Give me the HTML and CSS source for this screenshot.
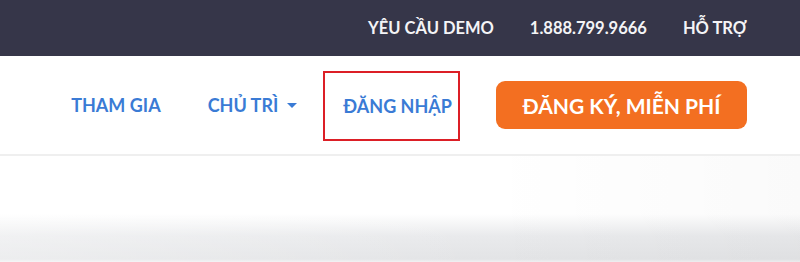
FILE: index.html
```html
<!DOCTYPE html>
<html lang="vi">
<head>
<meta charset="utf-8">
<link rel="stylesheet" href="styles.css">
</head>
<body>
<div class="topbar">
  <a class="top-link">YÊU CẦU DEMO</a>
  <a class="top-link">1.888.799.9666</a>
  <a class="top-link">HỖ TRỢ</a>
</div>
<div class="nav">
  <a class="nav-link join">THAM GIA</a>
  <a class="nav-link">CHỦ TRÌ<span class="caret"></span></a>
  <div class="highlight"><a class="nav-link">ĐĂNG NHẬP</a></div>
  <a class="signup">ĐĂNG KÝ, MIỄN PHÍ</a>
</div>
<div class="hero"></div>
</body>
</html>
```
FILE: styles.css
```css
html, body {
  margin: 0;
  padding: 0;
  background: #ffffff;
  font-family: Lato, "Noto Sans", sans-serif;
}
.topbar {
  height: 56px;
  background: #363649;
  display: flex;
  justify-content: flex-end;
  align-items: center;
  gap: 36px;
  padding-right: 53px;
}
.top-link {
  color: #f4f4f6;
  font-size: 16.5px;
  font-weight: 700;
}
.nav {
  height: 98px;
  display: flex;
  justify-content: flex-end;
  align-items: center;
  padding-right: 53px;
  border-bottom: 2px solid #efefef;
}
.nav-link {
  color: #3a7bd5;
  font-size: 18px;
  font-weight: 700;
  display: flex;
  align-items: center;
}
.nav-link.join { margin-right: 47px; }
.caret {
  width: 0;
  height: 0;
  border-left: 5.5px solid transparent;
  border-right: 5.5px solid transparent;
  border-top: 5.5px solid #3a7bd5;
  margin-left: 9px;
}
.highlight {
  margin-left: 26px;
  margin-top: 2px;
  height: 66px;
  padding: 0 6px 0 18px;
  border: 2px solid #dc1f26;
  display: flex;
  align-items: center;
  margin-right: 36px;
}
.signup {
  background: #f36f21;
  color: #ffffff;
  font-size: 21px;
  font-weight: 700;
  border-radius: 9px;
  width: 251px;
  height: 48px;
  display: flex;
  align-items: center;
  justify-content: center;
}
.hero {
  height: 106px;
  background:
    linear-gradient(to right, rgba(255,255,255,0.35), rgba(255,255,255,0) 60%, rgba(0,0,0,0.02)),
    linear-gradient(to bottom, #ffffff 0px, #ffffff 58px, #e9eaec 80px, #e3e4e6 103px, #f0f0f2 106px);
}
```
